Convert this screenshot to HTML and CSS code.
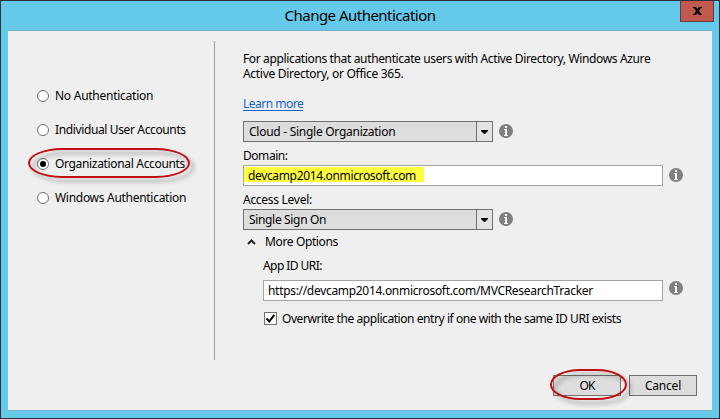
FILE: index.html
```
<!DOCTYPE html>
<html lang="en">
<head>
<meta charset="utf-8">
<title>Change Authentication</title>
<link rel="stylesheet" href="styles.css">
</head>
<body>
<svg width="0" height="0" class="defs" aria-hidden="true">
  <symbol id="info" viewBox="0 0 14 14">
    <circle cx="7" cy="7" r="7" fill="#808080"/>
    <path d="M6 2h2v2H6zM5 5h3v6h1v1H5v-1h1V6H5z" fill="#fff"/>
  </symbol>
</svg>
<div class="window">
  <header class="titlebar">
    <h1 class="title">Change Authentication</h1>
    <button class="close" aria-label="Close"><svg width="9" height="8" viewBox="0 0 9 8"><path d="M0 0h3l1.500 2L6 0h3v1H8L6 4l2 3h1v1H6L4.500 6 3 8H0V7h1l2-3-2-3H0z"/></svg></button>
  </header>
  <main class="content">
    <div class="columns">
      <div class="modes">
        <label class="mode"><span class="radio"></span><span class="t-none">No Authentication</span></label>
        <label class="mode"><span class="radio"></span><span class="t-indiv">Individual User Accounts</span></label>
        <label class="mode marked"><span class="radio selected"></span><span class="t-org">Organizational Accounts</span><span class="ring ring-mode"></span></label>
        <label class="mode"><span class="radio"></span><span class="t-win">Windows Authentication</span></label>
      </div>
      <div class="settings">
        <p class="intro"><span class="t-intro1">For applications that authenticate users with Active Directory, Windows Azure</span><span class="t-intro2">Active Directory, or Office 365.</span></p>
        <a class="learn">Learn more</a>
        <div class="row">
          <div class="combo"><span class="value t-cloud">Cloud - Single Organization</span><span class="drop"><svg width="7" height="4" viewBox="0 0 7 4"><path d="M0 0h7v1L4 4H3L0 1z"/></svg></span></div>
          <svg class="info" width="14" height="14"><use href="#info"/></svg>
        </div>
        <div class="label t-domain">Domain:</div>
        <div class="row">
          <div class="input domain"><span class="highlight t-dev">devcamp2014.onmicrosoft.com</span></div>
          <svg class="info" width="14" height="14"><use href="#info"/></svg>
        </div>
        <div class="label t-access">Access Level:</div>
        <div class="row">
          <div class="combo"><span class="value t-sso">Single Sign On</span><span class="drop"><svg width="7" height="4" viewBox="0 0 7 4"><path d="M0 0h7v1L4 4H3L0 1z"/></svg></span></div>
          <svg class="info" width="14" height="14"><use href="#info"/></svg>
        </div>
        <div class="expander"><svg width="9" height="6" viewBox="0 0 9 6"><path d="M1 5l3.500-3.500L8 5" fill="none" stroke="#222" stroke-width="2"/></svg><span class="t-more">More Options</span></div>
        <div class="options">
          <div class="label uri-label t-app">App ID URI:</div>
          <div class="row uri-row">
            <div class="input"><span class="t-uri">https://devcamp2014.onmicrosoft.com/MVCResearchTracker</span></div>
            <svg class="info" width="14" height="14"><use href="#info"/></svg>
          </div>
          <label class="check"><span class="box"><svg width="11" height="11" viewBox="0 0 11 11"><path d="M1.500 5.500L4.300 8.500 9.300 1.800" fill="none" stroke="#000" stroke-width="2"/></svg></span><span class="t-over">Overwrite the application entry if one with the same ID URI exists</span></label>
        </div>
      </div>
    </div>
    <footer class="actions">
      <div class="button marked"><span class="t-ok">OK</span><span class="ring ring-ok"></span></div>
      <div class="button"><span class="t-cancel">Cancel</span></div>
    </footer>
  </main>
</div>
</body>
</html>
```

FILE: styles.css
```
* { box-sizing: border-box; }
body {
  margin: 0;
  font: 12px/15px "Noto Sans", "Open Sans", sans-serif;
  color: #000;
  letter-spacing: -0.2px;
  white-space: nowrap;
}
svg { display: block; }
.defs { position: absolute; }
.window {
  width: 720px;
  height: 419px;
  border: 1px solid #2d3136;
  background: #65c9ea;
  padding: 0 7px 7px;
  display: flex;
  flex-direction: column;
}
.titlebar {
  height: 29px;
  display: grid;
  grid-template-columns: 1fr auto 1fr;
  margin-right: -2px;
}
.title {
  grid-column: 2;
  margin: 3px 2px 0 0;
  font-size: 15px;
  line-height: 22px;
  font-weight: 400;
  letter-spacing: -0.52px;
}
.close {
  justify-self: end;
  width: 34px;
  height: 21px;
  padding: 0 0 1px;
  border: 1px solid #643c40;
  border-top: 0;
  background: #c1594f;
  display: flex;
  align-items: center;
  justify-content: center;
}
.content {
  flex: 1;
  background: #efefef;
  border-top: 1px solid #72b1ca;
  border-bottom: 1px solid #72b1ca;
}
.columns { display: flex; height: 344px; padding-top: 10px; }
.modes {
  width: 207px;
  height: 319px;
  border-right: 1px solid #a0a0a0;
  padding: 47px 0 0 29px;
  display: flex;
  flex-direction: column;
  gap: 18px;
}
.mode { height: 16px; display: flex; align-items: center; gap: 6px; }
.mode > span:nth-child(2) { margin-bottom: 1px; }
.marked { position: relative; }
.radio {
  width: 12px;
  height: 12px;
  border: 1px solid #707070;
  border-radius: 50%;
  background: #fff;
  display: grid;
  place-items: center;
}
.selected::after { content: ""; width: 6px; height: 6px; border-radius: 50%; background: #000; }
.ring {
  position: absolute;
  border: 2px solid #c00d12;
  filter: drop-shadow(4px 4px 2px rgba(0, 0, 0, .35));
}
.ring-mode { left: -9px; top: -8px; width: 162px; height: 30px; border-radius: 34px / 15px; }
.ring-ok { left: -4px; top: -7px; width: 77px; height: 31px; border-radius: 30px / 15.5px; }
.settings { width: 460px; margin-left: 28px; padding-top: 10px; }
.intro { margin: 0 0 15px; }
.intro span { display: block; }
.learn { display: block; width: max-content; height: 15px; color: #1665cc; border-bottom: 1px solid #1665cc; line-height: 15px; letter-spacing: -0.5px; }
.row { display: flex; align-items: flex-start; gap: 6px; height: 21px; }
.learn + .row { margin-top: 10px; }
.info { margin-top: 3px; flex: none; }
.combo {
  width: 250px;
  height: 21px;
  border: 1px solid #707070;
  background: #dddddd;
  display: flex;
}
.value { flex: 1; padding: 2px 0 0 5px; }
.drop {
  width: 16px;
  border-left: 1px solid #707070;
  background: #e3e3e3;
  display: grid;
  place-items: center;
}
.label { margin: 6px 0 2px; }
.input {
  width: 420px;
  height: 21px;
  border: 1px solid #a5a5a5;
  background: #fff;
  padding: 2px 0 0 4px;
}
.domain { padding: 1px 0 0 0; }
.highlight { display: block; width: 180px; height: 15px; padding: 1px 0 0 4px; background: #ffff3e; }
.expander { display: flex; align-items: center; gap: 9px; height: 15px; margin-top: 4px; padding-left: 4px; }
.options { padding-left: 20px; }
.uri-label { margin: 9px 0 7px; }
.options .input { width: 400px; }
.row.uri-row > .info { margin-top: 1px; }
.check { display: flex; align-items: center; gap: 5px; margin: 10px 0 0 1px; height: 15px; }
.box { width: 13px; height: 13px; border: 1px solid #707070; background: #fff; }
.actions { display: flex; justify-content: flex-end; gap: 8px; padding-right: 15px; }
.button {
  width: 68px;
  height: 21px;
  border: 1px solid #707070;
  background: #dddddd;
  display: flex;
  align-items: center;
  justify-content: center;
}

/* Tracking per string */
.t-none { letter-spacing: -0.26px; }
.t-indiv { letter-spacing: -0.37px; }
.t-org { letter-spacing: -0.33px; }
.t-win { letter-spacing: -0.29px; }
.t-intro1 { letter-spacing: -0.36px; }
.t-intro2 { letter-spacing: -0.3px; }
.t-cloud { letter-spacing: -0.27px; }
.t-domain { letter-spacing: -0.45px; }
.t-dev { letter-spacing: -0.35px; }
.t-access { letter-spacing: -0.28px; }
.t-sso { letter-spacing: -0.34px; }
.t-more { letter-spacing: -0.37px; }
.t-app { letter-spacing: -0.56px; }
.t-uri { letter-spacing: -0.31px; }
.t-over { letter-spacing: -0.43px; }
.t-ok { letter-spacing: -0.8px; }
```
